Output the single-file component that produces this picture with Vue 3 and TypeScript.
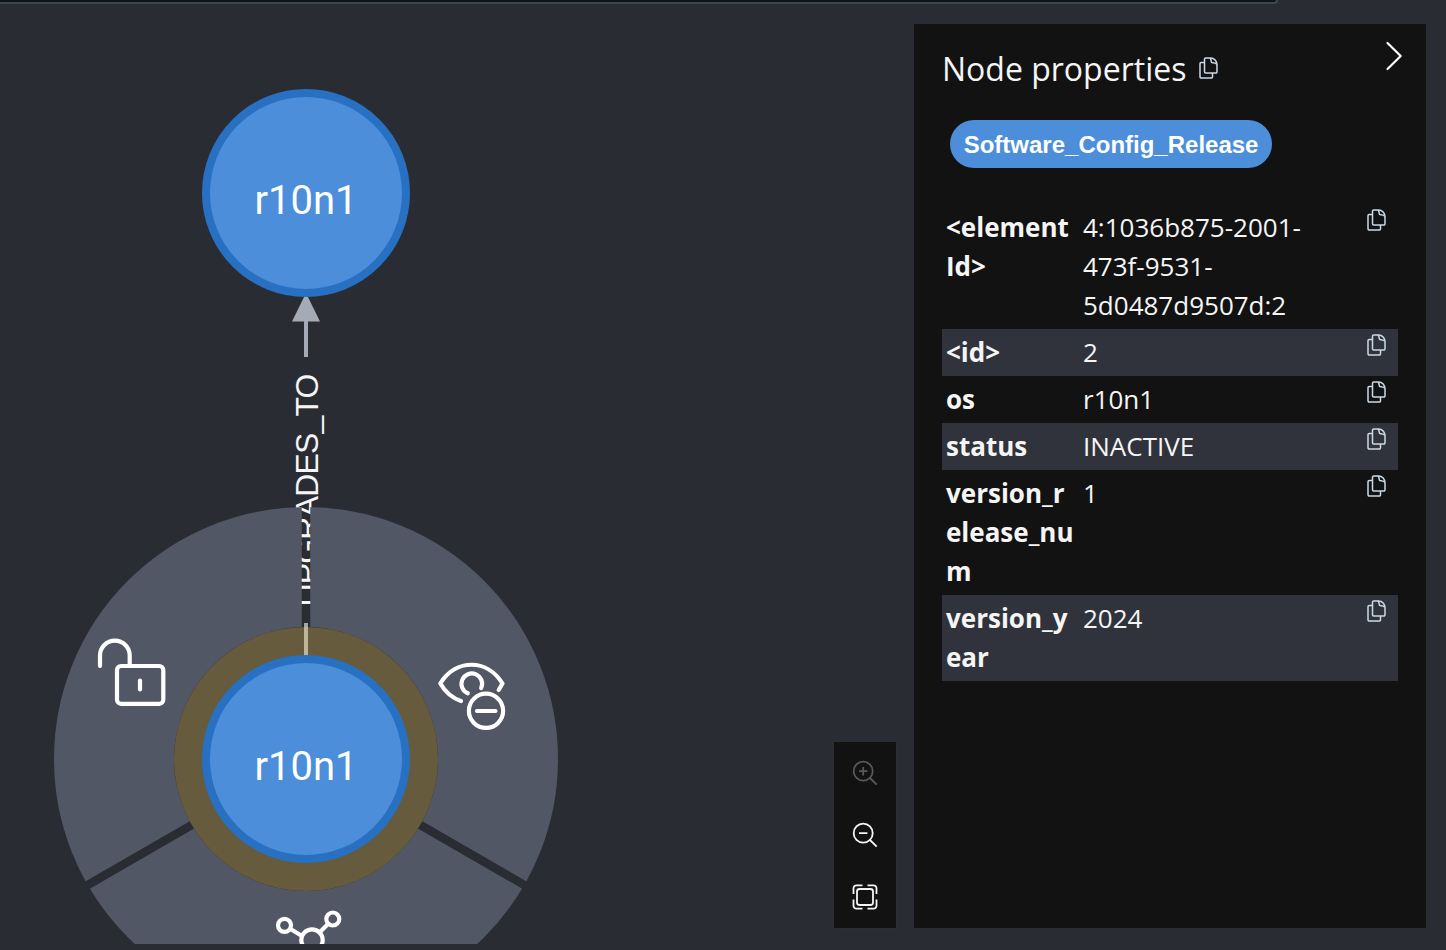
<script setup lang="ts">
import { defineComponent, h } from 'vue'

interface Property {
  key: string
  value: string
}

const properties: Property[] = [
  { key: '<elementId>', value: '4:1036b875-2001-473f-9531-5d0487d9507d:2' },
  { key: '<id>', value: '2' },
  { key: 'os', value: 'r10n1' },
  { key: 'status', value: 'INACTIVE' },
  { key: 'version_release_num', value: '1' },
  { key: 'version_year', value: '2024' },
]

const nodes = [
  { id: 'target', y: 193 },
  { id: 'source', y: 759 },
]

const CopyIcon = defineComponent({
  render: () =>
    h(
      'svg',
      {
        width: 19,
        height: 22,
        viewBox: '0 0 19 22',
        fill: 'none',
        stroke: '#cbd9e6',
        'stroke-width': 1.5,
        'stroke-linejoin': 'round',
      },
      [
        h('path', {
          d: 'M11.5 1H6.7a1.2 1.2 0 0 0-1.2 1.2v12.6a1.2 1.2 0 0 0 1.2 1.2h10.1a1.2 1.2 0 0 0 1.2-1.2V8C18 4 15.3 1 11.5 1z',
        }),
        h('path', { d: 'M11 1c1 1 1.2 2 1.2 3.2 0 1 .6 1.5 1.5 1.5 2 0 3.4.4 4.2 1.7' }),
        h('path', { d: 'M5.5 5.5H2.2A1.2 1.2 0 0 0 1 6.7v13.1a1.2 1.2 0 0 0 1.2 1.2h10.1a1.2 1.2 0 0 0 1.2-1.2V16' }),
      ],
    ),
})
</script>

<template>
  <div class="stage">
    <svg class="graph" width="1446" height="944" viewBox="0 0 1446 944">
      <defs>
        <mask id="wedges" maskUnits="userSpaceOnUse" x="0" y="480" width="620" height="540">
          <rect x="0" y="480" width="620" height="540" fill="#fff" />
          <path d="M306 759V490M306 759L63.5 899M306 759L548.5 899" stroke="#000" stroke-width="8.5" />
        </mask>
      </defs>

      <path d="M306 357V318" stroke="#a5abb6" stroke-width="4" />
      <path d="M306 293L320 321.500H292z" fill="#a5abb6" />
      <text class="relation" transform="translate(317.500 606.500) rotate(-90)" textLength="233">UPGRADES_TO</text>

      <circle cx="306" cy="759" r="192" fill="none" stroke="#525765" stroke-width="120" mask="url(#wedges)" />
      <circle cx="306" cy="759" r="132" fill="#665b3c" />
      <path d="M306 656V627" stroke="#bdb595" stroke-width="4" />
      <path d="M306 627V623" stroke="#a5a79f" stroke-width="4" />

      <g v-for="node in nodes" :key="node.id">
        <circle cx="306" :cy="node.y" r="100" fill="#4c8eda" stroke="#2870c2" stroke-width="8" />
        <text class="caption" x="254.500" :y="node.y + 20.500">r10n1</text>
      </g>

      <g class="menu-icon">
        <path d="M100 666V655.5a14.850 14.850 0 0 1 29.700 0V665" />
        <rect x="117" y="666" width="46.300" height="37.800" rx="4" />
        <path d="M140 680.500v9" />
      </g>
      <g class="menu-icon">
        <path d="M461 701C452 698 445 691.500 440.300 683.500C456 658.500 487 658.500 502.500 683.500L498.700 690" />
        <path d="M467.800 693.300A10.300 10.300 0 1 1 481.200 688" />
        <circle cx="486" cy="710.800" r="17.100" />
        <path d="M477 711h18.500" />
      </g>
      <g class="menu-icon">
        <circle cx="284.500" cy="925.300" r="6.500" />
        <circle cx="332.800" cy="919" r="6.500" />
        <circle cx="312" cy="940" r="10.700" />
        <path d="M290.500 929l11.500 7M328 924l-8.500 8.500" />
      </g>
    </svg>

    <div class="editor-edge"></div>

    <div class="overlay">
      <div class="controls">
        <button class="control disabled" aria-label="Zoom in">
          <svg width="28" height="28" viewBox="0 0 28 28">
            <circle cx="12.200" cy="12.200" r="9.500" /><path d="M19 19l6.700 6.700M8 12.200h8.400M12.200 8v8.400" />
          </svg>
        </button>
        <button class="control" aria-label="Zoom out">
          <svg width="28" height="28" viewBox="0 0 28 28">
            <circle cx="12.200" cy="12.200" r="9.500" /><path d="M19 19l6.700 6.700M8 12.200h8.400" />
          </svg>
        </button>
        <button class="control" aria-label="Zoom to fit">
          <svg width="28" height="28" viewBox="0 0 28 28">
            <path d="M2.500 11V5.300a3 3 0 0 1 3-3H11.500M16.500 2.300H22.500a3 3 0 0 1 3 3V11M25.500 16.500V22.700a3 3 0 0 1-3 3H16.500M11.500 25.700H5.500a3 3 0 0 1-3-3V16.500" />
            <rect x="6" y="6" width="16" height="16" rx="2.500" />
          </svg>
        </button>
      </div>

      <aside class="panel">
        <header class="head">
          <h2>Node properties</h2>
          <CopyIcon />
          <svg class="chevron" width="18" height="30" viewBox="0 0 18 30">
            <path d="M2.500 2L15.700 15L2.500 28" fill="none" stroke="#fff" stroke-width="2.200" stroke-linecap="round" stroke-linejoin="round" />
          </svg>
        </header>
        <span class="label">Software_Config_Release</span>
        <div class="table">
          <div v-for="property in properties" :key="property.key" class="row">
            <div class="key">{{ property.key }}</div>
            <div class="value">{{ property.value }}</div>
            <CopyIcon />
          </div>
        </div>
      </aside>
    </div>
  </div>
</template>

<style>
body {
  margin: 0;
  background: #2a2c34;
}
</style>

<style scoped>
.stage {
  position: relative;
  width: 1446px;
  height: 950px;
  overflow: hidden;
  background: #2a2c34;
  font-family: "Open Sans", "Noto Sans", sans-serif;
  color: #f5f5f5;
}
.graph {
  position: absolute;
  top: 0;
  left: 0;
}
.relation {
  font: 32px "Liberation Sans", Arial, sans-serif;
  fill: #f5f5f5;
}
.caption {
  font: 40px Roboto, "Liberation Sans", sans-serif;
  fill: #fff;
}
.menu-icon {
  fill: none;
  stroke: #fff;
  stroke-width: 4.2;
  stroke-linecap: round;
  stroke-linejoin: round;
}
.editor-edge {
  position: absolute;
  top: -10px;
  left: -10px;
  width: 1286px;
  height: 12px;
  background: #121212;
  border: solid #384a57;
  border-width: 0 2px 2px 0;
  border-radius: 0 0 4px 0;
}
.overlay {
  position: relative;
  display: flex;
  justify-content: flex-end;
  align-items: flex-end;
  gap: 18px;
  box-sizing: border-box;
  height: 950px;
  padding: 24px 20px 22px;
}
.controls {
  display: flex;
  flex-direction: column;
  width: 62px;
  background: #121212;
  box-shadow: 0 0 0 1px #2d2e33;
}
.control {
  display: flex;
  align-items: center;
  justify-content: center;
  height: 62px;
  padding: 0;
  border: 0;
  background: none;
}
.control svg {
  fill: none;
  stroke: #f5f5f5;
  stroke-width: 1.8;
}
.control.disabled svg {
  stroke: #595959;
}
.panel {
  box-sizing: border-box;
  width: 512px;
  height: 904px;
  padding: 18px 28px 0;
  background: #121212;
}
.head {
  display: flex;
  align-items: center;
  height: 52px;
}
.head h2 {
  margin: 1px 13px 0 0;
  font-size: 32px;
  font-weight: 400;
  line-height: 52px;
  white-space: nowrap;
}
.chevron {
  margin: -24px -5px 0 auto;
}
.label {
  display: block;
  width: max-content;
  margin: 26px 0 36px 8px;
  padding: 0 13.7px;
  border-radius: 24px;
  background: #4c8eda;
  color: #fff;
  font: bold 24px/49px "Liberation Sans", Arial, sans-serif;
  height: 48px;
}
.row {
  display: grid;
  grid-template-columns: 129px 275.5px 19px;
  column-gap: 8px;
  padding: 4px;
  font-size: 26px;
  line-height: 39px;
}
.row:nth-child(even) {
  background: #30333b;
}
.key {
  font-weight: 700;
  word-break: break-all;
}
.value {
  width: 240px;
}
.row svg {
  margin-top: 1px;
}
</style>
